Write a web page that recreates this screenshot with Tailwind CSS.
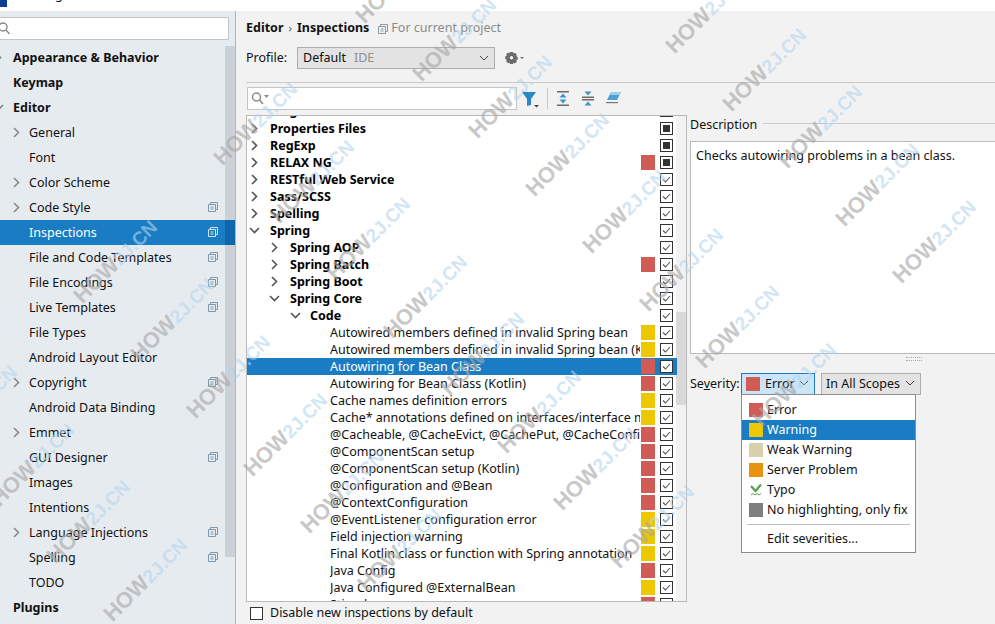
<!DOCTYPE html>
<html lang="en">
<head>
  <meta charset="UTF-8">
  <title>Settings</title>
  <script src="https://cdn.jsdelivr.net/npm/@tailwindcss/browser@4"></script>
</head>
<body class="bg-white">
  <div class="relative w-[995px] h-[624px] overflow-hidden font-['Noto_Sans','Open_Sans',sans-serif] text-[12.5px] text-[#111]">
    <!-- title bar, cut off by the crop -->
    <div class="h-[11px] bg-white relative overflow-hidden">
      <div class="absolute left-0 top-[-4px] w-[7px] h-[11px] bg-[#0b3d91]"></div>
      <span class="absolute left-[21px] top-[-14px] text-[12.5px]">Settings</span>
    </div>

    <div class="flex h-[613px]">
      <!-- left tree -->
      <aside class="relative w-[236px] shrink-0 bg-[#e6ebf0] border-r border-[#b4b4b4]">
        <div class="relative h-[23px] mt-[6px] mr-[6px] ml-[-2px] bg-white border border-[#c4c4c4]">
          <svg class="absolute left-[1px] top-[3px] w-[14px] h-[15px]" viewBox="0 0 14 15" fill="none" stroke="#888" stroke-width="1.4"><circle cx="3" cy="6" r="4"/><path d="M6 9l3.5 4"/></svg>
        </div>
        <div class="absolute right-0 top-[35px] w-[10px] h-[511px] bg-[#cbd1d6]"></div>
        <ul id="sideTree" class="relative mt-[5px]"></ul>
      </aside>

      <!-- right panel -->
      <main class="relative flex-1 bg-[#f2f2f2] pl-[10px]">
        <div class="flex items-center h-[34px] pt-[1px]">
          <span class="font-bold">Editor</span>
          <span class="mx-[5px] text-[11px] text-[#555]">›</span>
          <span class="font-bold">Inspections</span>
          <svg class="ml-[9px] mr-[3px] w-[10px] h-[10px]" viewBox="0 0 10 10" fill="none" stroke="#8c9aa6"><path d="M2.5 2.5V.5h7v7h-2M.5 2.500h7v7h-7zM2.500 5h3M2.500 7h3"/></svg>
          <span class="text-[#8a8a8a]">For current project</span>
        </div>
        <div class="flex items-center h-[22px] mt-[2px]">
          <span class="w-[51px]">Profile:</span>
          <div class="relative w-[198px] h-[22px] bg-[#e3e3e3] border border-[#adadad] flex items-center pl-[5px]">
            <span>Default</span><span class="ml-[8px] text-[#8f8f8f]">IDE</span>
            <svg class="absolute right-[5px] top-[7px] w-[10px] h-[7px]" viewBox="0 0 10 7" fill="none" stroke="#444"><path d="M1 1l4 4 4-4"/></svg>
          </div>
          <svg class="ml-[10px] w-[20px] h-[14px]" viewBox="0 0 20 14"><path fill="#6b6b6b" d="M5 1h3l.4 1.6 1.5-.8 2 2-.8 1.5 1.6.4v3l-1.6.4.8 1.5-2 2-1.5-.8L8 13H5l-.4-1.6-1.5.8-2-2 .8-1.5L.3 8.300v-3l1.600-.4-.8-1.500 2-2 1.500.8z"/><circle cx="6.500" cy="6.800" r="1.700" fill="#f2f2f2"/><path fill="#6b6b6b" d="M15 6h4l-2 2z"/></svg>
        </div>
        <div class="h-px bg-[#c9c9c9] mt-[13px]"></div>

        <!-- toolbar -->
        <div class="flex items-center h-[23px] mt-[4px] ml-px">
          <div class="relative w-[270px] h-[23px] bg-white border border-[#c4c4c4]">
            <svg class="absolute left-[3px] top-[3px] w-[19px] h-[15px]" viewBox="0 0 19 15" fill="none" stroke="#8a8a8a" stroke-width="1.500"><circle cx="5.500" cy="6" r="4"/><path d="M8.500 9l3.500 4"/><path fill="#8a8a8a" stroke="none" d="M13 4h5l-2.500 3z"/></svg>
          </div>
          <svg class="ml-[5px] w-[18px] h-[18px]" viewBox="0 0 18 18"><path fill="#2b86c5" d="M0 2h14L9 9v6l-4 1V9z"/><path fill="#444" d="M12 15h5l-2.500 2.500z"/></svg>
          <div class="w-px h-[21px] bg-[#c9c9c9] ml-[7px]"></div>
          <svg class="ml-[8px] w-[14px] h-[15px]" viewBox="0 0 14 15"><path fill="#6b6b6b" d="M1 0h12v1.500H1zM1 13.500h12V15H1z"/><path fill="#3d94cf" d="M7 2.500l3.500 4h-7zM7 12.500l-3.500-4h7z"/></svg>
          <svg class="ml-[11px] w-[14px] h-[15px]" viewBox="0 0 14 15"><path fill="#6b6b6b" d="M1 5.500h12V7H1zM1 8h12v1.500H1z"/><path fill="#3d94cf" d="M7 4.500L3.500.5h7zM7 10.500l3.500 4h-7z"/></svg>
          <svg class="ml-[11px] w-[16px] h-[15px]" viewBox="0 0 16 15"><path fill="#4f9fd6" d="M5 1h10L11 9H1z"/><path fill="#9fcdec" d="M5 1h10l-1.500 3H3z"/><path fill="#777" d="M0 11h12v1.200H0z"/></svg>
        </div>

        <!-- inspections tree -->
        <div class="relative mt-[5px] w-[441px] h-[487px] bg-white border border-[#b9b9b9] overflow-hidden">
          <div class="absolute right-0 top-0 bottom-0 w-[10px] bg-[#f2f2f2]"></div>
          <div class="absolute right-0 top-[196px] h-[93px] w-[10px] bg-[#d9d9d9]"></div>
          <div class="absolute left-[23px] top-[-11px] font-bold leading-[12px] text-black">Plugin DevKit</div>
          <span class="absolute left-[413px] top-[-12px] w-[13px] h-[13px] bg-white border border-[#333]"></span>
          <ul id="inspTree" class="relative pt-[4px]"></ul>
        </div>

        <label class="flex items-center h-[14px] mt-[4px] ml-[4px]">
          <span class="w-[13px] h-[13px] bg-white border border-[#333] mr-[7px]"></span>
          <span>Disable new inspections by default</span>
        </label>

        <!-- description -->
        <div class="absolute left-[454px] top-[107px] right-0 flex items-center h-[14px]">
          <span>Description</span>
          <div class="flex-1 h-px bg-[#c9c9c9] ml-[6px] mt-[-3px]"></div>
        </div>
        <div class="absolute left-[454px] top-[130px] w-[310px] h-[213px] bg-white border border-[#b9b9b9] pl-[5px] pt-[5px]">Checks autowiring problems in a bean class.</div>
        <div class="absolute left-[670px] top-[346px] w-[16px] h-[4px] border-y border-dotted border-[#aaa]"></div>

        <!-- severity -->
        <div class="absolute left-[454px] top-[362px] flex items-center h-[22px]">
          <span class="w-[51px]">Se<span class="underline">v</span>erity:</span>
          <div class="relative w-[74px] h-[22px] bg-[#cce4f7] border border-[#1a7dc4] flex items-center pl-[4px]">
            <span class="w-[14px] h-[14px] bg-[#d15b55] mr-[5px]"></span><span>Error</span>
            <svg class="absolute right-[5px] top-[6px] w-[10px] h-[7px]" viewBox="0 0 10 7" fill="none" stroke="#444"><path d="M1 1l4 4 4-4"/></svg>
          </div>
          <div class="relative ml-[6px] w-[100px] h-[22px] bg-[#e3e3e3] border border-[#adadad] flex items-center pl-[4px]">
            <span>In All Scopes</span>
            <svg class="absolute right-[5px] top-[6px] w-[10px] h-[7px]" viewBox="0 0 10 7" fill="none" stroke="#444"><path d="M1 1l4 4 4-4"/></svg>
          </div>
        </div>

        <!-- severity dropdown -->
        <div class="absolute left-[505px] top-[383px] w-[175px] h-[159px] bg-white border border-[#8c8c8c] pt-[5px]">
          <ul id="severityList"></ul>
          <div class="h-px bg-[#bdbdbd] mx-[5px] my-[4px]"></div>
          <div class="h-[20px] leading-[20px] pl-[25px]">Edit severities...</div>
        </div>
      </main>
    </div>

    <!-- watermark -->
    <div id="marks" class="absolute inset-0 pointer-events-none"></div>
  </div>

  <script>
    const copyIcon = '<svg class="absolute right-[17px] top-[7px] w-[10px] h-[10px]" viewBox="0 0 10 10" fill="none" stroke="COLOR"><path d="M2.500 2.500V.5h7v7h-2M.5 2.500h7v7h-7zM2.500 5h3M2.500 7h3"/></svg>';
    const chevRight = '<svg class="w-[7px] h-[11px]" viewBox="0 0 7 11" fill="none" stroke="COLOR" stroke-width="1.600"><path d="M1 1l4.500 4.500L1 10"/></svg>';
    const chevDown = '<svg class="w-[11px] h-[7px]" viewBox="0 0 11 7" fill="none" stroke="COLOR" stroke-width="1.600"><path d="M1 1l4.500 4.500L10 1"/></svg>';

    // left tree: [label, arrow, bold, copy icon, selected]
    const sideItems = [
      ['Appearance & Behavior', 'r0', true], ['Keymap', '', true], ['Editor', 'd0', true],
      ['General', 'r', false], ['Font', '', false], ['Color Scheme', 'r', false],
      ['Code Style', 'r', false, true], ['Inspections', '', false, true, true],
      ['File and Code Templates', '', false, true], ['File Encodings', '', false, true],
      ['Live Templates', '', false, true], ['File Types', '', false], ['Android Layout Editor', '', false],
      ['Copyright', 'r', false, true], ['Android Data Binding', '', false], ['Emmet', 'r', false],
      ['GUI Designer', '', false, true], ['Images', '', false], ['Intentions', '', false],
      ['Language Injections', 'r', false, true], ['Spelling', '', false, true], ['TODO', '', false],
      ['Plugins', '', true]
    ];
    document.getElementById('sideTree').innerHTML = sideItems.map(([label, arrow, bold, copy, sel]) => {
      const left = bold ? 'left-[13px]' : 'left-[29px]';
      let mark = '';
      if (arrow === 'r') mark = '<span class="absolute left-[13px] top-[7px] flex">' + chevRight.replace('COLOR', '#8a8a8a') + '</span>';
      if (arrow === 'r0') mark = '<span class="absolute left-[-5px] top-[7px] flex">' + chevRight.replace('COLOR', '#8a8a8a') + '</span>';
      if (arrow === 'd0') mark = '<span class="absolute left-[-7px] top-[9px] flex">' + chevDown.replace('COLOR', '#8a8a8a') + '</span>';
      const thumb = sel ? '<span class="absolute right-0 top-0 bottom-0 w-[10px] bg-[#0f66ab]"></span>' : '';
      return `<li class="relative h-[25px] leading-[25px] ${sel ? 'bg-[#1a7dc4] text-white' : ''} ${bold ? 'font-bold' : ''}">${thumb}${mark}<span class="absolute ${left}">${label.replace('&', '&amp;')}</span>${copy ? copyIcon.replace('COLOR', sel ? '#cfe3f2' : '#7d97ab') : ''}</li>`;
    }).join('');

    // inspection rows: [label, level, arrow, severity, state, selected]
    const R = 'bg-[#d15b55]', Y = 'bg-[#edc800]';
    const rows = [
      ['Properties Files', 0, 'r', '', 'mixed'], ['RegExp', 0, 'r', '', 'mixed'], ['RELAX NG', 0, 'r', R, 'mixed'],
      ['RESTful Web Service', 0, 'r', '', 'on'], ['Sass/SCSS', 0, 'r', '', 'on'], ['Spelling', 0, 'r', '', 'on'],
      ['Spring', 0, 'd', '', 'on'], ['Spring AOP', 1, 'r', '', 'on'], ['Spring Batch', 1, 'r', R, 'on'],
      ['Spring Boot', 1, 'r', '', 'on'], ['Spring Core', 1, 'd', '', 'on'], ['Code', 2, 'd', '', 'on'],
      ['Autowired members defined in invalid Spring bean', 3, '', Y, 'on'],
      ['Autowired members defined in invalid Spring bean (Kotlin)', 3, '', Y, 'on'],
      ['Autowiring for Bean Class', 3, '', R, 'on', true],
      ['Autowiring for Bean Class (Kotlin)', 3, '', R, 'on'],
      ['Cache names definition errors', 3, '', Y, 'on'],
      ['Cache* annotations defined on interfaces/interface methods', 3, '', Y, 'on'],
      ['@Cacheable, @CacheEvict, @CachePut, @CacheConfig', 3, '', R, 'on'],
      ['@ComponentScan setup', 3, '', R, 'on'], ['@ComponentScan setup (Kotlin)', 3, '', R, 'on'],
      ['@Configuration and @Bean', 3, '', R, 'on'], ['@ContextConfiguration', 3, '', R, 'on'],
      ['@EventListener configuration error', 3, '', Y, 'on'], ['Field injection warning', 3, '', Y, 'on'],
      ['Final Kotlin class or function with Spring annotation', 3, '', Y, 'on'],
      ['Java Config', 3, '', R, 'on'], ['Java Configured @ExternalBean', 3, '', Y, 'on'],
      ['Stimulus', 3, '', R, 'on']
    ];
    const textLeft = ['left-[23px]', 'left-[43px]', 'left-[63px]', 'left-[83px]'];
    const arrowLeft = ['left-[4px]', 'left-[24px]', 'left-[44px]'];
    const arrowLeftD = ['left-[2px]', 'left-[22px]', 'left-[43px]'];
    document.getElementById('inspTree').innerHTML = rows.map(([label, level, arrow, sev, state, sel]) => {
      let mark = '';
      if (arrow === 'r') mark = `<span class="absolute ${arrowLeft[level]} top-[3px] flex">${chevRight.replace('COLOR', '#555')}</span>`;
      if (arrow === 'd') mark = `<span class="absolute ${arrowLeftD[level]} top-[5px] flex">${chevDown.replace('COLOR', '#555')}</span>`;
      const box = state === 'mixed'
        ? '<span class="w-[7px] h-[7px] bg-[#333]"></span>'
        : '<svg class="w-[11px] h-[11px]" viewBox="0 0 11 11" fill="none" stroke="#555" stroke-width="1.100"><path d="M2 5.500l2.500 2.500L9 3"/></svg>';
      return `<li class="relative h-[17px] leading-[17px] ${sel ? 'bg-[#1a7dc4] text-white w-[430px]' : ''} ${level < 3 ? 'font-bold text-black' : ''}">
        ${mark}
        <span class="absolute ${textLeft[level]} overflow-hidden whitespace-nowrap w-[310px]">${label}</span>
        ${sev ? `<span class="absolute left-[394px] top-[1px] w-[14px] h-[15px] ${sev}"></span>` : ''}
        <span class="absolute left-[413px] top-[2px] w-[13px] h-[13px] bg-white border border-[#333] flex items-center justify-center">${box}</span>
      </li>`;
    }).join('');

    // severity menu
    const severities = [
      ['Error', 'bg-[#d15b55]'], ['Warning', 'bg-[#edc800]', true], ['Weak Warning', 'bg-[#d9d0ac]'],
      ['Server Problem', 'bg-[#e8930f]'], ['Typo', ''], ['No highlighting, only fix', 'bg-[#7f7f7f]']
    ];
    document.getElementById('severityList').innerHTML = severities.map(([label, color, sel]) => {
      const icon = color
        ? `<span class="w-[14px] h-[14px] ${color}"></span>`
        : '<svg class="w-[14px] h-[14px]" viewBox="0 0 14 14" fill="none"><path stroke="#5a9e52" stroke-width="2.200" d="M2 3l4.500 5L12 1.500"/><path stroke="#5a9e52" d="M2 12l2-1.500 2 1.500 2-1.500 2 1.500 2-1.500"/></svg>';
      return `<li class="flex items-center h-[20px] pl-[7px] ${sel ? 'bg-[#1a7dc4] text-white' : ''}">${icon}<span class="ml-[4px]">${label}</span></li>`;
    }).join('');

    // HOW2J.CN watermark: [first x, first y, count] per diagonal
    const markLines = [[-65, 448, 4], [75, 303, 6], [215, 165, 8], [357, 23, 8], [667, 53, 5]];
    let marks = '';
    markLines.forEach(([x0, y0, count]) => {
      for (let k = 0; k < count; k++) {
        const x = x0 + 56.7 * k + 11;
        const y = y0 + 57.5 * k + 4;
        marks += `<span class="absolute origin-bottom-left -rotate-45 font-['Liberation_Sans',sans-serif] font-bold text-[22px] leading-[22px] whitespace-nowrap" style="left:${x}px;top:${y - 22}px"><span class="text-[#a8a8a8]/65">HOW</span><span class="text-[19px] text-[#b4d4ee]/60">2J.CN</span></span>`;
      }
    });
    document.getElementById('marks').innerHTML = marks;
  </script>
</body>
</html>
